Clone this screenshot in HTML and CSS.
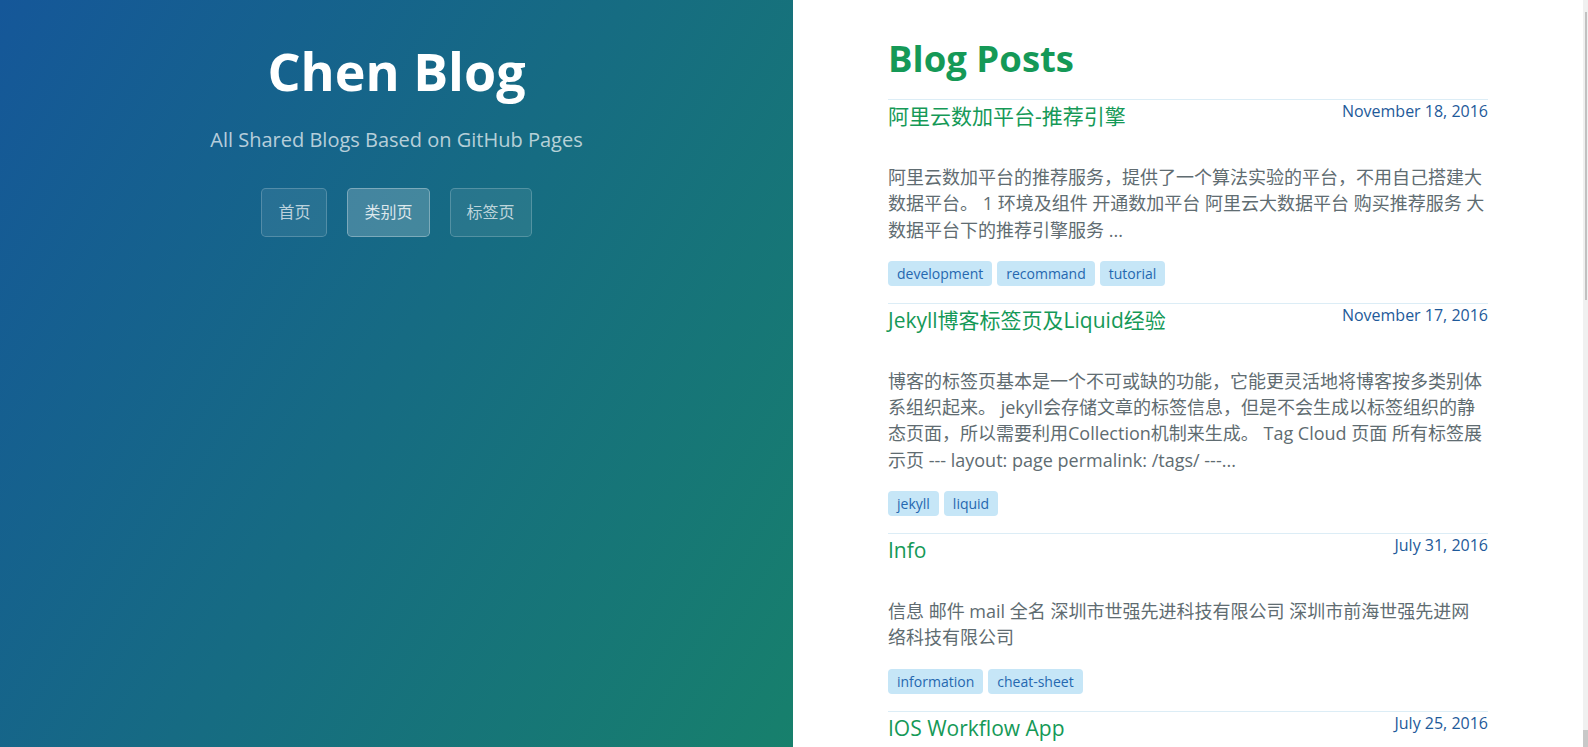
FILE: index.html
```html
<!DOCTYPE html>
<html lang="zh-CN">
<head>
<meta charset="utf-8">
<title>Chen Blog</title>
<link rel="stylesheet" href="styles.css">
</head>
<body>
<header class="side">
  <h1 class="project-name">Chen Blog</h1>
  <h2 class="tagline">All Shared Blogs Based on GitHub Pages</h2>
  <nav class="nav">
    <a class="btn" href="#">首页</a>
    <a class="btn btn-active" href="#">类别页</a>
    <a class="btn" href="#">标签页</a>
  </nav>
</header>
<main class="main">
  <div class="content">
    <h1 class="page-title">Blog Posts</h1>

    <article class="post">
      <div class="post-head">
        <a class="post-title" href="#">阿里云数加平台-推荐引擎</a>
        <span class="post-date">November 18, 2016</span>
      </div>
      <p class="excerpt">阿里云数加平台的推荐服务，提供了一个算法实验的平台，不用自己搭建大数据平台。 1 环境及组件 开通数加平台 阿里云大数据平台 购买推荐服务 大数据平台下的推荐引擎服务 ...</p>
      <div class="tags">
        <a class="tag" href="#">development</a>
        <a class="tag" href="#">recommand</a>
        <a class="tag" href="#">tutorial</a>
      </div>
    </article>

    <article class="post">
      <div class="post-head">
        <a class="post-title" href="#">Jekyll博客标签页及Liquid经验</a>
        <span class="post-date">November 17, 2016</span>
      </div>
      <p class="excerpt">博客的标签页基本是一个不可或缺的功能，它能更灵活地将博客按多类别体系组织起来。 jekyll会存储文章的标签信息，但是不会生成以标签组织的静态页面，所以需要利用Collection机制来生成。 Tag Cloud 页面 所有标签展示页 --- layout: page permalink: /tags/ ---...</p>
      <div class="tags">
        <a class="tag" href="#">jekyll</a>
        <a class="tag" href="#">liquid</a>
      </div>
    </article>

    <article class="post">
      <div class="post-head">
        <a class="post-title" href="#">Info</a>
        <span class="post-date">July 31, 2016</span>
      </div>
      <p class="excerpt">信息 邮件 mail 全名 深圳市世强先进科技有限公司 深圳市前海世强先进网络科技有限公司</p>
      <div class="tags">
        <a class="tag" href="#">information</a>
        <a class="tag" href="#">cheat-sheet</a>
      </div>
    </article>

    <article class="post">
      <div class="post-head">
        <a class="post-title" href="#">IOS Workflow App</a>
        <span class="post-date">July 25, 2016</span>
      </div>
      <p class="excerpt">Workflow 是 iOS 上的一款自动化工具，通过拖拽动作组合成工作流，可以完成许多重复性的操作。 常用工作流 分享 剪贴板 网页 ...</p>
      <div class="tags">
        <a class="tag" href="#">ios</a>
        <a class="tag" href="#">tools</a>
      </div>
    </article>

    <article class="post">
      <div class="post-head">
        <a class="post-title" href="#">GitHub Pages 搭建博客</a>
        <span class="post-date">July 20, 2016</span>
      </div>
      <p class="excerpt">使用 GitHub Pages 和 Jekyll 搭建个人博客，主题基于 Cayman，支持分类页和标签页。 1 创建仓库 2 配置 _config.yml 3 编写文章 ...</p>
      <div class="tags">
        <a class="tag" href="#">jekyll</a>
        <a class="tag" href="#">github</a>
      </div>
    </article>

    <article class="post">
      <div class="post-head">
        <a class="post-title" href="#">Markdown 语法速查</a>
        <span class="post-date">July 12, 2016</span>
      </div>
      <p class="excerpt">Markdown 是一种轻量级标记语言，常用语法包括标题、列表、引用、代码块、链接和图片等。 ...</p>
      <div class="tags">
        <a class="tag" href="#">markdown</a>
        <a class="tag" href="#">cheat-sheet</a>
      </div>
    </article>
  </div>
</main>
<div class="rail" aria-hidden="true">
  <div class="rail-thumb"></div>
  <div class="rail-end"></div>
</div>
</body>
</html>
```

FILE: styles.css
```css
html,
body {
  height: 100%;
}

body {
  margin: 0;
  display: flex;
  overflow: hidden;
  background: #fff;
  font-family: "Open Sans", "Noto Sans CJK SC", sans-serif;
  color: #606c71;
}

a {
  text-decoration: none;
}

.side {
  flex: none;
  width: 793px;
  height: 100%;
  box-sizing: border-box;
  padding-top: 32px;
  text-align: center;
  color: #fff;
  background: linear-gradient(120deg, #155799 0%, #17806c 100%);
}

.project-name {
  margin: 0;
  font-size: 52px;
  line-height: 78px;
  font-weight: 700;
  color: #fff;
}

.tagline {
  margin: 15px 0 0;
  font-size: 20px;
  line-height: 30px;
  font-weight: 400;
  color: rgba(255, 255, 255, 0.7);
}

.nav {
  display: flex;
  justify-content: center;
  gap: 20px;
  margin-top: 33px;
}

.btn {
  display: block;
  padding: 12px 16px;
  font-size: 16px;
  line-height: 23px;
  color: rgba(255, 255, 255, 0.7);
  background: rgba(255, 255, 255, 0.08);
  border: 1px solid rgba(255, 255, 255, 0.2);
  border-radius: 4.8px;
}

.btn-active {
  color: rgba(255, 255, 255, 0.82);
  background: rgba(255, 255, 255, 0.2);
  border-color: rgba(255, 255, 255, 0.3);
}

.main {
  flex: 1;
  min-width: 0;
  height: 100%;
  overflow-y: auto;
  scrollbar-width: none;
}

.main::-webkit-scrollbar {
  display: none;
}

.rail {
  flex: none;
  width: 5px;
  height: 100%;
  display: flex;
  flex-direction: column;
  background: #f0f0f0;
}

.rail-thumb {
  margin: 12px 1px 0 2px;
  height: 288px;
  background: #c1c1c1;
}

.rail-end {
  margin-top: auto;
  height: 17px;
  background: #c8c8c8;
}

.content {
  width: 600px;
  margin: 0 auto;
  padding-top: 34px;
  padding-bottom: 40px;
}

.page-title {
  margin: 0 0 17px;
  font-size: 36.5px;
  line-height: 48px;
  font-weight: 700;
  color: #159957;
}

.post {
  border-top: 1px solid #dcedf6;
}

.post-head {
  display: flex;
  justify-content: space-between;
  align-items: flex-start;
}

.post-title {
  font-size: 21px;
  line-height: 32px;
  font-weight: 400;
  color: #159957;
}

.post-date {
  font-size: 16px;
  line-height: 23px;
  color: #1e5a9a;
}

.excerpt {
  margin: 32px 0 18px;
  padding-right: 3px;
  font-size: 18px;
  line-height: 26.3px;
  color: #606c71;
}

.tags {
  display: flex;
  flex-wrap: wrap;
  gap: 5px;
  margin-bottom: 17px;
}

.tag {
  padding: 3px 9px;
  font-size: 14px;
  line-height: 19px;
  color: #2568b0;
  background: #c6e6f7;
  border-radius: 4px;
}
```
